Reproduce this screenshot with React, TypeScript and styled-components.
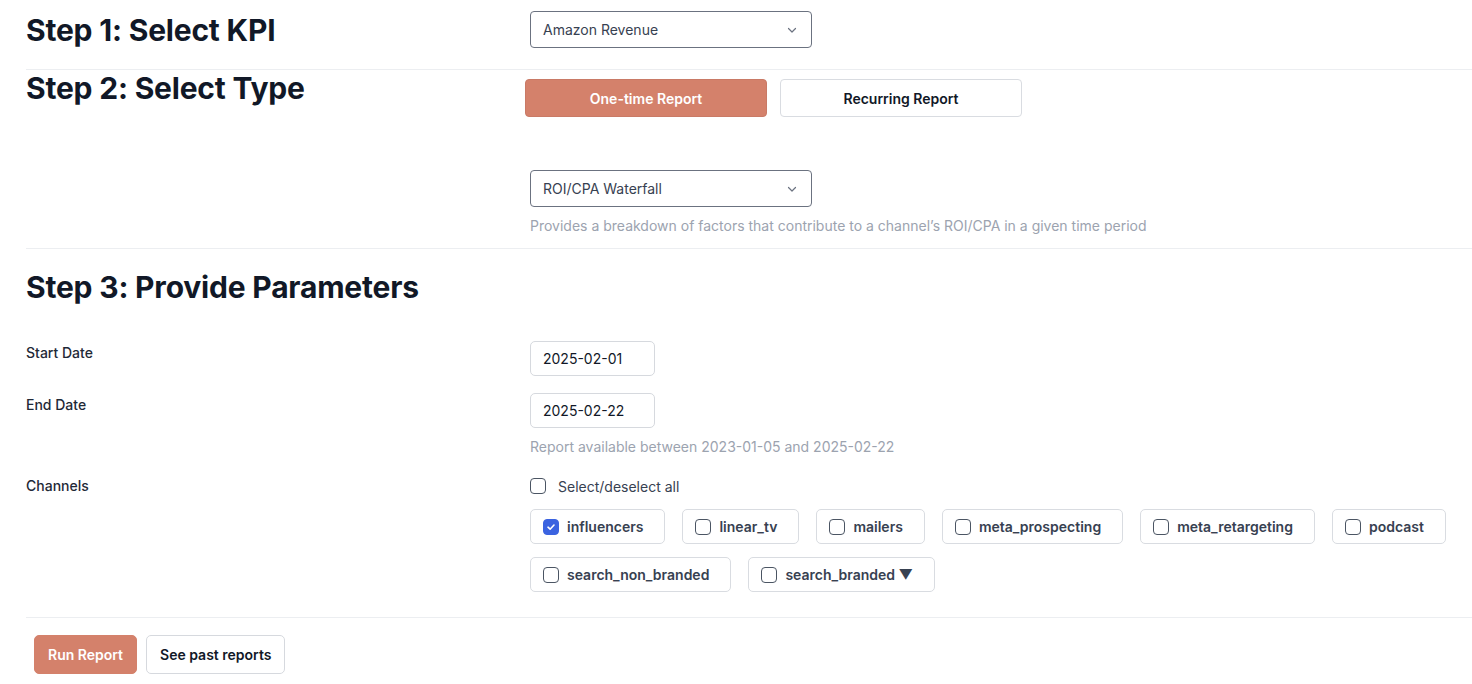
import React from "react";
import styled, { createGlobalStyle } from "styled-components";

const GlobalStyle = createGlobalStyle`
  html, body { margin: 0; padding: 0; background: #ffffff; }
  body { font-family: Inter, "Noto Sans", Arial, sans-serif; color: #111827; }
  * { box-sizing: border-box; }
`;

const Page = styled.div`
  padding-left: 26px;
`;

const Section = styled.section<{ $pt: number; $pb: number; $divider?: boolean }>`
  display: grid;
  grid-template-columns: 504px 1fr;
  align-items: start;
  padding-top: ${(p) => p.$pt}px;
  padding-bottom: ${(p) => p.$pb}px;
  border-bottom: ${(p) => (p.$divider ? "1px solid #eceef1" : "none")};
`;

const Heading = styled.h2<{ $mt?: number }>`
  margin: ${(p) => p.$mt ?? 0}px 0 0 0;
  font-size: 30px;
  line-height: 36px;
  font-weight: 700;
  letter-spacing: -0.2px;
  color: #111827;
`;

const Column = styled.div`
  display: flex;
  flex-direction: column;
  align-items: flex-start;
`;

const SelectBox = styled.div`
  width: 282px;
  height: 37px;
  border: 1px solid #6b7280;
  border-radius: 4px;
  display: flex;
  align-items: center;
  justify-content: space-between;
  padding: 0 13px 0 12px;
  font-size: 14px;
  color: #374151;
  background: #fff;
`;

const TypeRow = styled.div`
  display: flex;
  gap: 13px;
  margin-left: -5px;
  margin-top: 9px;
`;

const TypeButton = styled.button<{ $active?: boolean }>`
  width: 242px;
  height: 38px;
  border-radius: 4px;
  border: 1px solid ${(p) => (p.$active ? "#c97a66" : "#d9dce1")};
  background: ${(p) => (p.$active ? "#d4816b" : "#ffffff")};
  color: ${(p) => (p.$active ? "#ffffff" : "#111827")};
  font-family: Inter, sans-serif;
  font-size: 14px;
  font-weight: 600;
  cursor: pointer;
`;

const Spacer = styled.div<{ $h: number }>`
  height: ${(p) => p.$h}px;
`;

const Hint = styled.div<{ $mt: number }>`
  margin-top: ${(p) => p.$mt}px;
  font-size: 14px;
  line-height: 20px;
  color: #9ca3af;
`;

const ParamsSection = styled.section`
  padding-top: 20px;
  padding-bottom: 25px;
  border-bottom: 1px solid #eceef1;
`;

const FormRow = styled.div<{ $mt: number }>`
  display: grid;
  grid-template-columns: 504px 1fr;
  align-items: start;
  margin-top: ${(p) => p.$mt}px;
`;

const Label = styled.div<{ $pt: number }>`
  padding-top: ${(p) => p.$pt}px;
  font-size: 14px;
  line-height: 20px;
  font-weight: 500;
  color: #1f2937;
`;

const DateInput = styled.div`
  width: 125px;
  height: 35px;
  border: 1px solid #d6d9de;
  border-radius: 5px;
  display: flex;
  align-items: center;
  padding-left: 12px;
  font-size: 14px;
  color: #111827;
`;

const CheckLine = styled.label`
  display: flex;
  align-items: center;
  gap: 12px;
  height: 20px;
  font-size: 14px;
  color: #374151;
`;

const Box = styled.span<{ $checked?: boolean }>`
  width: 16px;
  height: 16px;
  border-radius: 4px;
  border: 1px solid ${(p) => (p.$checked ? "#3b63e0" : "#4b5563")};
  background: ${(p) => (p.$checked ? "#3b63e0" : "#fff")};
  display: inline-flex;
  align-items: center;
  justify-content: center;
  flex: none;
`;

const ChipWrap = styled.div`
  display: flex;
  flex-wrap: wrap;
  column-gap: 17px;
  row-gap: 13px;
  margin-top: 13px;
  max-width: 940px;
`;

const Chip = styled.label`
  height: 35px;
  border: 1px solid #d9dce1;
  border-radius: 5px;
  display: flex;
  align-items: center;
  gap: 8px;
  padding: 0 21px 0 12px;
  font-size: 14px;
  font-weight: 600;
  color: #374151;
`;

const Footer = styled.div`
  display: flex;
  gap: 9px;
  padding: 17px 0 0 8px;
`;

const ActionButton = styled.button<{ $primary?: boolean }>`
  height: 39px;
  padding: 0 13px;
  border-radius: 5px;
  border: 1px solid ${(p) => (p.$primary ? "#d4816b" : "#d6d9de")};
  background: ${(p) => (p.$primary ? "#d4816b" : "#fff")};
  color: ${(p) => (p.$primary ? "#fff" : "#111827")};
  font-family: Inter, sans-serif;
  font-size: 14px;
  font-weight: 600;
`;

const Chevron = () => (
  <svg width="12" height="12" viewBox="0 0 12 12" fill="none">
    <path d="M2.5 4.5 L6 8 L9.5 4.5" stroke="#6b7280" strokeWidth="1.2" strokeLinecap="round" strokeLinejoin="round" />
  </svg>
);

const Check = () => (
  <svg width="10" height="10" viewBox="0 0 10 10" fill="none">
    <path d="M2 5.2 L4.1 7.2 L8 3" stroke="#fff" strokeWidth="1.6" strokeLinecap="round" strokeLinejoin="round" />
  </svg>
);

const channels: { name: string; checked?: boolean }[] = [
  { name: "influencers", checked: true },
  { name: "linear_tv" },
  { name: "mailers" },
  { name: "meta_prospecting" },
  { name: "meta_retargeting" },
  { name: "podcast" },
  { name: "search_non_branded" },
  { name: "search_branded ▼" },
];

export default function App() {
  return (
    <>
      <GlobalStyle />
      <Page>
        <Section $pt={11} $pb={21} $divider>
          <Heading $mt={1}>Step 1: Select KPI</Heading>
          <Column>
            <SelectBox>
              <span>Amazon Revenue</span>
              <Chevron />
            </SelectBox>
          </Column>
        </Section>

        <Section $pt={0} $pb={12} $divider>
          <Heading>Step 2: Select Type</Heading>
          <Column>
            <TypeRow>
              <TypeButton $active>One-time Report</TypeButton>
              <TypeButton>Recurring Report</TypeButton>
            </TypeRow>
            <Spacer $h={53} />
            <SelectBox>
              <span>ROI/CPA Waterfall</span>
              <Chevron />
            </SelectBox>
            <Hint $mt={9}>
              Provides a breakdown of factors that contribute to a channel’s ROI/CPA in a given time period
            </Hint>
          </Column>
        </Section>

        <ParamsSection>
          <Heading>Step 3: Provide Parameters</Heading>
          <FormRow $mt={36}>
            <Label $pt={2}>Start Date</Label>
            <DateInput>2025-02-01</DateInput>
          </FormRow>
          <FormRow $mt={17}>
            <Label $pt={2}>End Date</Label>
            <Column>
              <DateInput>2025-02-22</DateInput>
              <Hint $mt={9}>Report available between 2023-01-05 and 2025-02-22</Hint>
            </Column>
          </FormRow>
          <FormRow $mt={19}>
            <Label $pt={0}>Channels</Label>
            <Column>
              <CheckLine>
                <Box />
                Select/deselect all
              </CheckLine>
              <ChipWrap>
                {channels.map((c) => (
                  <Chip key={c.name}>
                    <Box $checked={c.checked}>{c.checked && <Check />}</Box>
                    {c.name}
                  </Chip>
                ))}
              </ChipWrap>
            </Column>
          </FormRow>
        </ParamsSection>

        <Footer>
          <ActionButton $primary>Run Report</ActionButton>
          <ActionButton>See past reports</ActionButton>
        </Footer>
      </Page>
    </>
  );
}
